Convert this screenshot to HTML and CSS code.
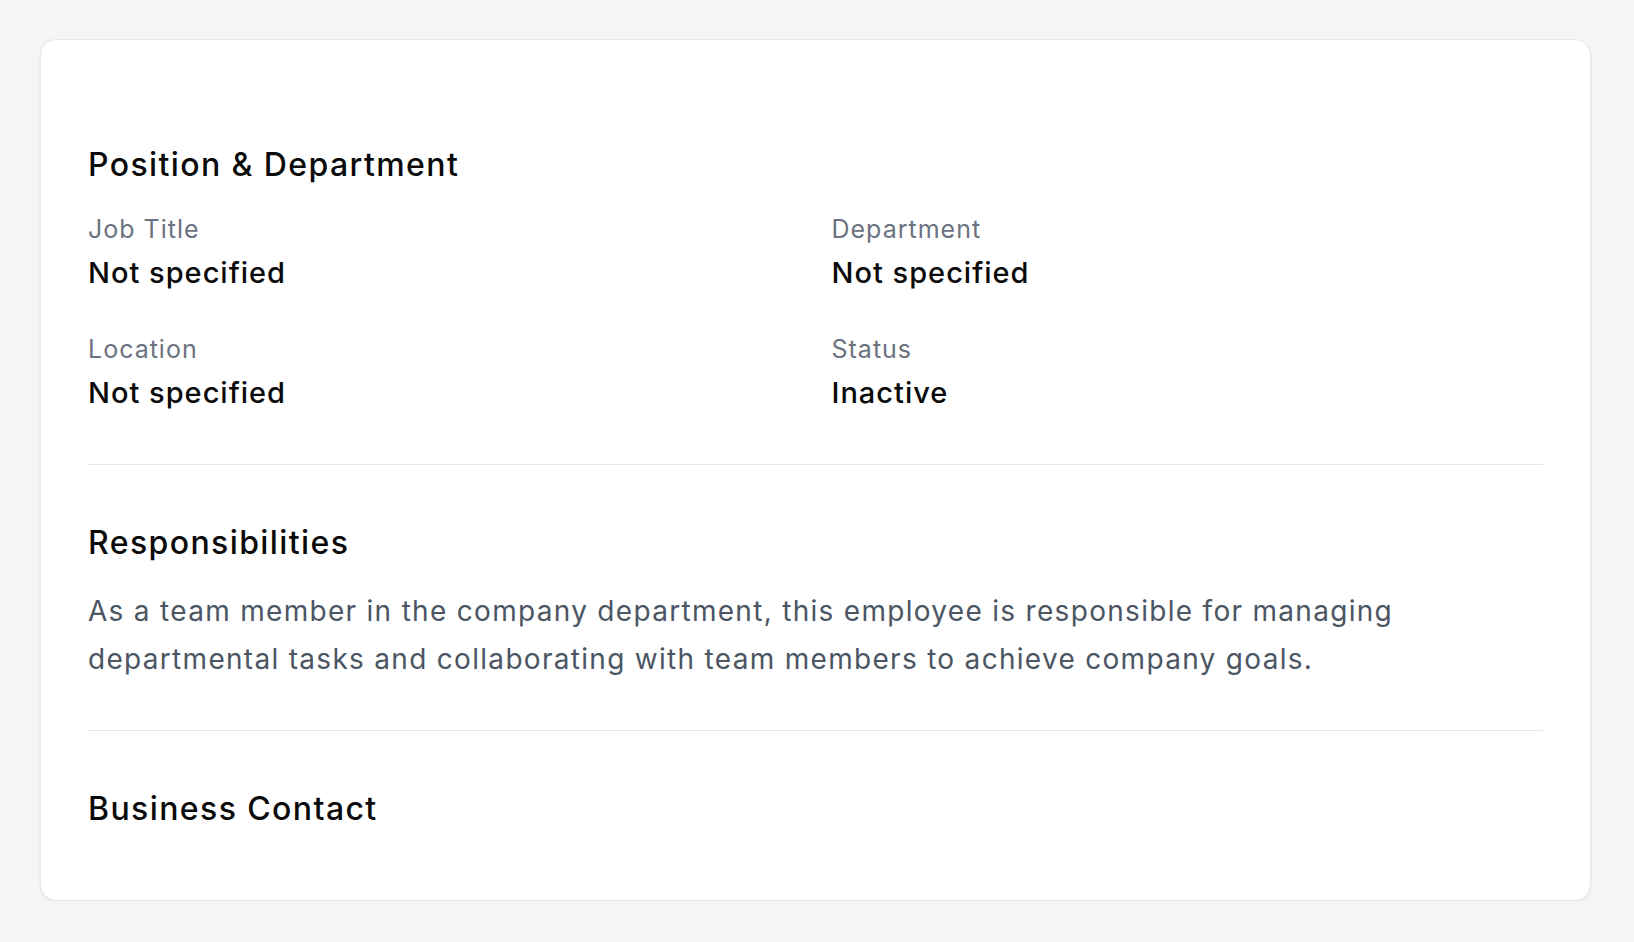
FILE: index.html
```html
<!DOCTYPE html>
<html lang="en">
<head>
<meta charset="utf-8">
<title>Employee Details</title>
<link rel="stylesheet" href="styles.css">
</head>
<body>
<div class="card">
  <section class="section first">
    <h3 class="heading">Position &amp; Department</h3>
    <div class="grid">
      <div class="field">
        <div class="label">Job Title</div>
        <div class="value">Not specified</div>
      </div>
      <div class="field">
        <div class="label">Department</div>
        <div class="value">Not specified</div>
      </div>
      <div class="field">
        <div class="label">Location</div>
        <div class="value">Not specified</div>
      </div>
      <div class="field">
        <div class="label">Status</div>
        <div class="value">Inactive</div>
      </div>
    </div>
  </section>
  <section class="section middle">
    <h3 class="heading">Responsibilities</h3>
    <p class="text">As a team member in the company department, this employee is responsible for managing departmental tasks and collaborating with team members to achieve company goals.</p>
  </section>
  <section class="section last">
    <h3 class="heading">Business Contact</h3>
  </section>
</div>
</body>
</html>
```

FILE: styles.css
```css
* { box-sizing: border-box; }
html, body { margin: 0; padding: 0; }
body {
  background: #f5f5f4;
  font-family: Inter, "Noto Sans", sans-serif;
  padding: 39px 43px 0 40px;
}
.card {
  background: #ffffff;
  border: 1px solid #e7e7e6;
  border-radius: 16px;
  box-shadow: 0 1px 3px rgba(0,0,0,0.06);
  height: 862px;
  padding: 0 47px;
}
.section {
  padding: 54px 0 49px;
  border-bottom: 1px solid #e5e7eb;
}
.section.first { padding-top: 101px; padding-bottom: 50px; }
.section.middle { padding-bottom: 47px; }
.section.last { border-bottom: none; }
.heading {
  margin: 0;
  font-size: 32px;
  line-height: 48px;
  font-weight: 450;
  color: #0a0a0a;
  letter-spacing: 1.4px;
}
.grid {
  display: grid;
  grid-template-columns: 1fr 1fr;
  column-gap: 32px;
  row-gap: 38px;
  margin-top: 23px;
}
.label {
  font-size: 25px;
  line-height: 35px;
  color: #6b7280;
  margin-bottom: 5px;
  letter-spacing: 1px;
}
.value {
  font-size: 29px;
  line-height: 42px;
  font-weight: 500;
  color: #0a0a0a;
  letter-spacing: 1px;
}
.text {
  margin: 20px 0 0;
  font-size: 28px;
  line-height: 48px;
  color: #4b5563;
  letter-spacing: 1.3px;
}
```
